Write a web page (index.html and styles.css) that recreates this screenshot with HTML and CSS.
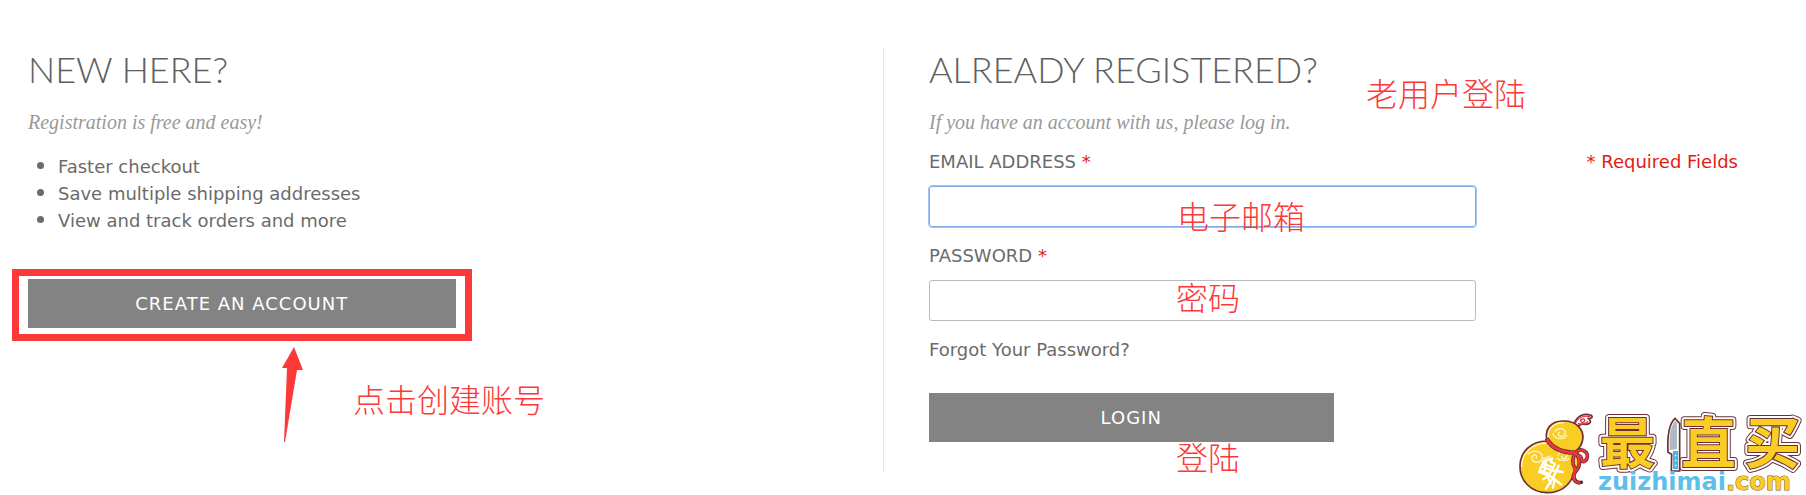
FILE: index.html
```html
<!DOCTYPE html>
<html lang="en">
<head>
<meta charset="utf-8">
<meta name="viewport" content="width=device-width, initial-scale=1">
<title>Login or Create an Account</title>
<link rel="stylesheet" href="styles.css">
</head>
<body>
<main class="page">
  <section class="column">
    <h1 class="title">NEW HERE?</h1>
    <p class="lead">Registration is free and easy!</p>
    <ul class="benefits">
      <li class="benefit">Faster checkout</li>
      <li class="benefit">Save multiple shipping addresses</li>
      <li class="benefit">View and track orders and more</li>
    </ul>
    <div class="create">
      <button class="button" type="button">CREATE AN ACCOUNT</button>
      <span class="highlight"></span>
      <svg class="arrow" width="24" height="98" viewBox="0 0 24 98" aria-hidden="true"><path d="M13 1 22 24 16 24 4 96H3L6 22H1Z" fill="#fc3939"/></svg>
      <span class="note note-create" lang="zh">点击创建账号</span>
    </div>
  </section>

  <section class="column column-login">
    <h1 class="title">ALREADY REGISTERED?</h1>
    <span class="note note-login" lang="zh">老用户登陆</span>
    <p class="lead">If you have an account with us, please log in.</p>
    <form class="form">
      <div class="label-row">
        <label for="email">EMAIL ADDRESS <span class="required">*</span></label>
        <span class="required">* Required Fields</span>
      </div>
      <div class="field">
        <input class="input input-active" id="email" type="email">
        <span class="note note-email" lang="zh">电子邮箱</span>
      </div>
      <div class="label-row">
        <label for="password">PASSWORD <span class="required">*</span></label>
      </div>
      <div class="field">
        <input class="input" id="password" type="password">
        <span class="note note-password" lang="zh">密码</span>
      </div>
      <a class="forgot" href="#">Forgot Your Password?</a>
      <div class="submit">
        <button class="button" type="button">LOGIN</button>
        <span class="note note-submit" lang="zh">登陆</span>
      </div>
    </form>
  </section>

  <svg class="logo" width="306" height="95" viewBox="0 0 306 95" role="img" aria-label="zuizhimai.com">
    <defs>
      <g id="name" class="logo-name">
        <text x="100" y="63">最</text>
        <text x="181" y="63">直</text>
        <text x="245" y="63">买</text>
      </g>
    </defs>
    <g transform="scale(.33333)" fill="none" stroke-linecap="round" stroke-linejoin="round">
      <path d="M222 72C231 46 253 39 273 46C281 50 274 57 264 55C281 66 266 76 247 72L233 78Z" fill="#fff" stroke="#6c2f35" stroke-width="5"/>
      <path d="M226 70C234 52 252 46 270 50M235 71C248 75 258 70 264 65M243 58a6 6 0 1 0 11 2a5 5 0 0 0-9-1" stroke="#e8323b" stroke-width="4"/>
      <path d="M142 123C131 91 151 62 190 63C230 62 253 90 248 119C246 134 238 144 231 151C244 180 235 207 221 225C204 264 174 279 139 278C92 276 59 241 60 198C60 154 96 122 142 123Z" fill="#f9cd24" stroke="#6c2f35" stroke-width="5"/>
      <path d="M146 126C138 94 154 69 191 68M65 200C65 158 99 130 140 129M165 93C183 77 202 91 193 104C183 116 168 104 178 97M159 100C160 118 189 121 200 106M84 162C107 144 131 158 126 176C119 194 89 187 97 169C104 159 115 168 108 175M126 176C140 176 146 171 150 168M174 166C179 150 202 152 201 166C198 181 181 177 187 168M171 175C182 185 199 183 207 176" stroke="#fff5c8" stroke-width="4"/>
      <path d="M142 120C157 144 188 158 227 158" stroke="#6c2f35" stroke-width="14"/>
      <path d="M228 158C240 142 262 153 262 168C262 182 250 190 245 182C246 170 239 166 230 164M225 161C217 174 216 192 224 202C233 213 216 224 223 236C227 247 236 249 244 247M231 163C243 185 239 203 225 217C214 230 222 246 237 249" stroke="#6c2f35" stroke-width="11"/>
      <path d="M142 120C157 144 188 158 227 158" stroke="#f0363d" stroke-width="9"/>
      <path d="M228 158C240 142 262 153 262 168C262 182 250 190 245 182C246 170 239 166 230 164M225 161C217 174 216 192 224 202C233 213 216 224 223 236M231 163C243 185 239 203 225 217C214 230 222 246 237 249" stroke="#f0363d" stroke-width="6"/>
      <path d="M130 184 156 175 153 186 165 192 151 218M130 186 119 211 148 222M131 192 153 200M126 200 150 209M138 183 133 214M117 216 146 226 130 238M150 210 188 216M176 197 160 232 138 266M150 228 184 254M164 237 159 263M141 226 152 250" stroke="#fff" stroke-width="7"/>
    </g>
    <use href="#name" class="name-rim"/>
    <use href="#name" class="name-gap"/>
    <use href="#name" class="name-fill"/>
    <g transform="scale(.33333)">
      <path d="M525 55C503 75 502 118 504 157L515 163 514 213H539V70Z" fill="#fff" stroke="#6c2f35" stroke-width="5"/>
      <path d="M525 62C508 84 508 117 509 151L531 147V69Z" fill="#aebbc5"/>
      <path d="M519 153H534V207H519Z" fill="#3fb9e8"/>
      <path d="M527 164V202" stroke="#e4f7ff" stroke-width="5" stroke-dasharray="5 10"/>
    </g>
    <text class="logo-url" x="98" y="90">zuizhimai<tspan class="logo-tld">.com</tspan></text>
  </svg>
</main>
</body>
</html>
```
FILE: styles.css
```css
* {
  box-sizing: border-box;
}

body {
  margin: 0;
  background: #fff;
  color: #6b6b6b;
  font: 18px/27px "DejaVu Sans", sans-serif;
}

.page {
  position: relative;
  display: grid;
  grid-template-columns: 1fr 1fr;
  padding: 48px 68px 23px 28px;
}

.column {
  position: relative;
}

.column-login {
  padding-left: 45px;
  border-left: 1px solid #e6e6e6;
}

.title {
  margin: 0;
  color: #606060;
  font: 300 36px/42px Lato, sans-serif;
}

.lead {
  margin: 18px 0 0;
  color: #999;
  font: italic 20px/28px "Liberation Serif", serif;
}

.benefits {
  margin: 17px 0 45px;
  padding-left: 30px;
  list-style: none;
}

.benefit {
  position: relative;
}

.benefit::before {
  content: "";
  position: absolute;
  top: 9px;
  left: -21px;
  width: 7px;
  height: 7px;
  border-radius: 50%;
  background: #6b6b6b;
}

.create,
.submit {
  position: relative;
  width: 50%;
}

.button {
  display: block;
  width: 100%;
  padding: 11px 0;
  border: 0;
  border-radius: 0;
  background: #838383;
  color: #fff;
  font: inherit;
  letter-spacing: 1px;
}

.highlight {
  position: absolute;
  inset: -10px -16px -13px;
  border: 7px solid #fc3939;
}

.arrow {
  position: absolute;
  top: 67px;
  left: 253px;
}

.label-row {
  display: flex;
  justify-content: space-between;
}

.required {
  color: #df1b12;
}

.form {
  margin-top: 12px;
}

.field {
  position: relative;
  width: calc(68% - 3px);
  margin: 11px 0 15px;
}

.input {
  display: block;
  width: 100%;
  height: 41px;
  padding: 0 12px;
  border: 1px solid #bbb;
  border-radius: 3px;
  background: #fff;
  color: inherit;
  font: inherit;
}

.input-active {
  border-color: #84a9e6;
  outline: 1px solid #a4c3f3;
}

.forgot {
  color: inherit;
  text-decoration: none;
}

.submit {
  margin: 30px 0;
}

.note {
  position: absolute;
  color: #fc3939;
  font: 300 32px/32px "Noto Sans CJK SC", sans-serif;
  white-space: nowrap;
  pointer-events: none;
}

.note-create {
  top: 103px;
  left: 325px;
}

.note-login {
  top: 28px;
  left: 482px;
}

.note-email {
  top: 13px;
  left: 248px;
}

.note-password {
  top: 0;
  left: 247px;
}

.note-submit {
  top: 47px;
  left: 247px;
}

.logo {
  position: absolute;
  right: 0;
  bottom: 0;
}

.logo-name {
  font: 700 55px "Noto Sans CJK SC", sans-serif;
}

.name-rim {
  fill: #6c2f35;
  stroke: #6c2f35;
  stroke-width: 8px;
  stroke-linejoin: round;
}

.name-gap {
  fill: #fff;
  stroke: #fff;
  stroke-width: 6px;
  stroke-linejoin: round;
}

.name-fill {
  fill: #f9cd24;
  stroke: #6c2f35;
  stroke-width: 2px;
  paint-order: stroke;
}

.logo-url {
  fill: #5dbfea;
  font: 700 24px "DejaVu Sans", sans-serif;
}

.logo-tld {
  fill: #f9cd24;
  stroke: #8a5a30;
  stroke-width: 1px;
  paint-order: stroke;
}
```
